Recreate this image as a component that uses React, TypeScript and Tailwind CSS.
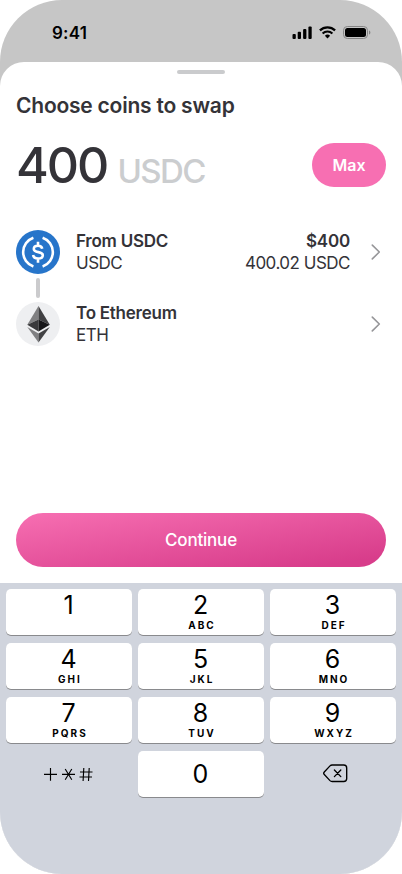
import React from "react";

const keys = [
  { digit: "1", letters: "" },
  { digit: "2", letters: "ABC" },
  { digit: "3", letters: "DEF" },
  { digit: "4", letters: "GHI" },
  { digit: "5", letters: "JKL" },
  { digit: "6", letters: "MNO" },
  { digit: "7", letters: "PQRS" },
  { digit: "8", letters: "TUV" },
  { digit: "9", letters: "WXYZ" },
];

function StatusBar() {
  return (
    <header className="flex h-[62px] shrink-0 items-start justify-between pl-[52px] pr-[31px] pt-[22px]">
      <span className="text-[17px] font-semibold leading-[22px] tracking-[0.2px] text-black">9:41</span>
      <div className="flex items-center gap-[7px] pt-[4px]">
        <svg width="20" height="13" viewBox="0 0 20 13" fill="#000">
          <rect x="0.5" y="8" width="3.3" height="5" rx="1" />
          <rect x="5.7" y="5.8" width="3.3" height="7.2" rx="1" />
          <rect x="11.1" y="3" width="3.3" height="10" rx="1" />
          <rect x="16.4" y="0.4" width="3.3" height="12.6" rx="1" />
        </svg>
        <svg width="17" height="13" viewBox="0 0 17 13" fill="none" stroke="#000">
          <path d="M0.9 4.4a11 11 0 0 1 15.2 0" strokeWidth="2.2" />
          <path d="M3.6 7.5a7.1 7.1 0 0 1 9.8 0" strokeWidth="2.1" />
          <path d="M8.5 12.5 5.9 9.8a3.8 3.8 0 0 1 5.2 0Z" fill="#000" stroke="none" />
        </svg>
        <svg width="28" height="13" viewBox="0 0 28 13">
          <rect x="0.5" y="0.5" width="24" height="12" rx="3.8" fill="none" stroke="#858585" />
          <rect x="2" y="2" width="21" height="9" rx="2.5" fill="#000" />
          <path d="M26 4.5v4c.8-.3 1.4-1.1 1.4-2s-.6-1.7-1.4-2Z" fill="#858585" />
        </svg>
      </div>
    </header>
  );
}

function UsdcIcon() {
  return (
    <svg width="44" height="44" viewBox="0 0 44 44" fill="none">
      <circle cx="22" cy="22" r="22" fill="#2775CA" />
      <path d="M17.4 7.8a15.1 15.1 0 0 0 0 28.6M26.6 7.8a15.1 15.1 0 0 1 0 28.6" stroke="#fff" strokeWidth="2.6" />
      <path
        d="M26.2 18.8c-.3-2-1.8-3-4.2-3-2.5 0-4.2 1.1-4.2 3.1 0 4.6 9 1.9 9 6.3 0 2.1-1.9 3.3-4.7 3.3-2.9 0-4.7-1.2-5-3.5M22 11.7v4M22 28.6v4.2"
        stroke="#fff"
        strokeWidth="2.6"
      />
    </svg>
  );
}

function EthIcon() {
  return (
    <svg width="44" height="44" viewBox="0 0 44 44">
      <circle cx="22" cy="22" r="22" fill="#EEEFF1" />
      <path d="M22.5 4 11.3 22.8l11.2-5.2Z" fill="#808082" />
      <path d="m22.5 4 11.3 18.8-11.3-5.2Z" fill="#404042" />
      <path d="m11.3 22.8 11.2-5.2v11.8Z" fill="#39393b" />
      <path d="m33.8 22.8-11.3-5.2v11.8Z" fill="#171719" />
      <path d="m11.3 25 11.2 6.6v8.8Z" fill="#808082" />
      <path d="m33.8 25-11.3 6.6v8.8Z" fill="#424244" />
    </svg>
  );
}

function Chevron() {
  return (
    <svg width="10" height="16" viewBox="0 0 10 16" fill="none" stroke="#969699" strokeWidth="1.6" strokeLinecap="round" strokeLinejoin="round">
      <path d="m1.3 1.1 7 6.9-7 6.9" />
    </svg>
  );
}

function CoinRow({ icon, title, symbol, fiat, amount }: { icon: React.ReactNode; title: string; symbol: string; fiat?: string; amount?: string }) {
  return (
    <div className="flex h-11 items-center pr-[5px] text-[17px] leading-[22px] text-[#343338]">
      {icon}
      <div className="ml-4 flex-1">
        <p className="font-semibold tracking-[-0.25px]">{title}</p>
        <p className="tracking-[-0.5px]">{symbol}</p>
      </div>
      <div className="mr-[21px] text-right">
        <p className="font-semibold tracking-[-0.2px]">{fiat}</p>
        <p className="tracking-[-0.5px]">{amount}</p>
      </div>
      <Chevron />
    </div>
  );
}

function Keypad() {
  return (
    <section className="h-[291px] bg-[#d0d4dd] px-1.5 pt-1.5 text-black">
      <div className="grid grid-cols-3 gap-x-1.5 gap-y-2">
        {keys.map((key) => (
          <button key={key.digit} className="flex h-[46px] flex-col items-center rounded-[5px] bg-white shadow-[0_1px_0_#898a8d]">
            <span className="h-[31px] pr-px text-[25px] font-normal leading-[32px]">{key.digit}</span>
            <span className="pl-[2px] text-[10px] font-bold leading-[11px] tracking-[2px]">{key.letters}</span>
          </button>
        ))}
        <button className="flex h-[46px] items-center justify-center" aria-label="Symbols">
          <svg width="50" height="16" viewBox="0 0 50 16" fill="none" stroke="#000" strokeWidth="1.15">
            <path d="M0 8.4h13M6.5 2v12.8" />
            <path d="M18 8.4h13M21.2 3l6.6 10.8M27.8 3l-6.6 10.8" />
            <path d="M36 6h12.5M35.5 11H48M39.8 2l-.7 13M45.2 2l-.7 13" />
          </svg>
        </button>
        <button className="flex h-[46px] items-center justify-center rounded-[5px] bg-white pr-px text-[25px] font-normal leading-[31px] shadow-[0_1px_0_#898a8d]">0</button>
        <button className="flex h-[46px] items-center justify-center pb-[2px] pl-[4px]" aria-label="Delete">
          <svg width="25" height="19" viewBox="0 0 25 19" fill="none" stroke="#000" strokeWidth="1.35" strokeLinecap="round" strokeLinejoin="round">
            <path d="M9.1 1h11.6a3 3 0 0 1 3 3v10.5a3 3 0 0 1-3 3H9.1a3 3 0 0 1-2.1-.9L1.3 10.5a1.8 1.8 0 0 1 0-2.5L7 1.9A3 3 0 0 1 9.1 1Z" />
            <path d="m11.4 6 6.4 6.6M17.8 6l-6.4 6.6" />
          </svg>
        </button>
      </div>
    </section>
  );
}

export default function App() {
  return (
    <div className="h-[874px] w-[402px] bg-white font-['Inter',sans-serif]">
      <div className="flex h-full flex-col overflow-hidden rounded-[62px] bg-[#c6c6c6]">
        <StatusBar />
        <main className="flex flex-1 flex-col rounded-t-[24px] bg-white">
          <div className="flex flex-1 flex-col px-4">
            <div className="mt-2 h-1 w-12 self-center rounded-full bg-[#cacbcd]" />
            <h1 className="mt-[18px] text-[21px] font-semibold leading-7 tracking-[-0.22px] text-[#343338]">Choose coins to swap</h1>
            <div className="mt-[23px] flex h-11 items-center justify-between">
              <div className="flex items-baseline gap-[10px] pt-[5px]">
                <span className="text-[50px] font-medium leading-[44px] tracking-[-2px] text-[#343338]">400</span>
                <span className="text-[33px] font-medium leading-[44px] tracking-[-1.6px] text-[#cbcdcf]">USDC</span>
              </div>
              <button className="h-11 w-[74px] rounded-full bg-[#f76fb2] text-[16px] font-semibold leading-[22px] text-white">Max</button>
            </div>
            <div className="mt-[43px]">
              <CoinRow icon={<UsdcIcon />} title="From USDC" symbol="USDC" fiat="$400" amount="400.02 USDC" />
              <div className="my-1 ml-5 h-5 w-1 rounded-full bg-[#cbcbcd]" />
              <CoinRow icon={<EthIcon />} title="To Ethereum" symbol="ETH" />
            </div>
            <button className="mb-4 mt-auto h-[54px] rounded-full bg-[linear-gradient(172deg,#f76fb2_0%,#d83d8b_90%)] text-[17px] font-medium leading-[22px] tracking-[-0.2px] text-white">
              Continue
            </button>
          </div>
          <Keypad />
        </main>
      </div>
    </div>
  );
}
